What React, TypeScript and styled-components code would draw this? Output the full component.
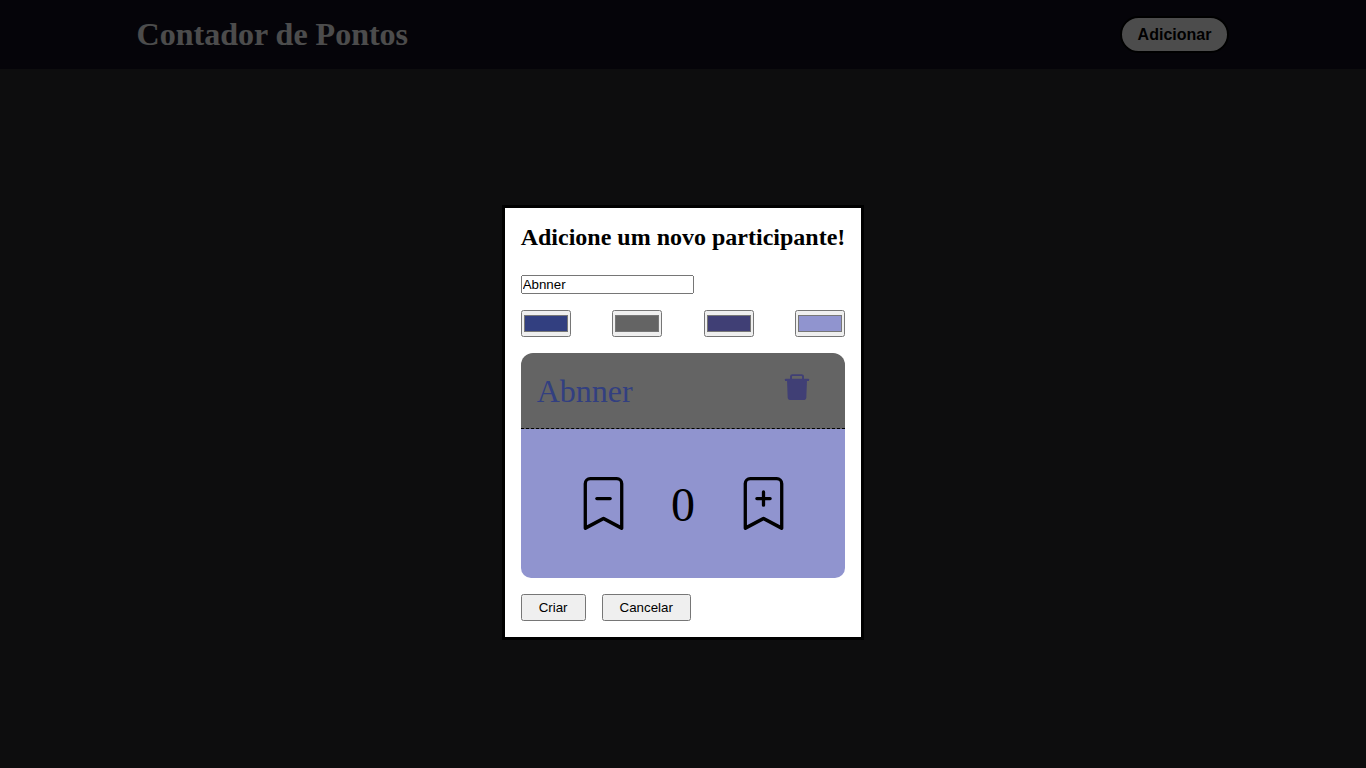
import React, { useState } from "react";
import styled, { createGlobalStyle } from "styled-components";
import { BsBookmarkDash, BsBookmarkPlus } from "react-icons/bs";

const GlobalStyle = createGlobalStyle`
  * { margin: 0; padding: 0; box-sizing: border-box; }
  body {
    min-height: 100vh;
    background: #2c2c2f;
    font-family: "Liberation Serif", "Times New Roman", serif;
  }
  button, input { font-family: "Liberation Sans", Arial, sans-serif; }
`;

const Header = styled.header`
  display: flex;
  align-items: center;
  justify-content: space-between;
  padding: 16px 10%;
  background: #110f20;
`;

const Title = styled.h1`
  font-size: 32px;
  line-height: 37px;
  color: #fff;
`;

const AddButton = styled.button`
  padding: 8px 16px;
  border: 2px solid #000;
  border-radius: 20px;
  background: #fff;
  color: #000;
  font-size: 16px;
  font-weight: bold;
  line-height: 17px;
`;

const Overlay = styled.div`
  position: fixed;
  inset: 0;
  display: grid;
  place-items: center;
  padding-top: 10vh;
  background: rgba(0, 0, 0, 0.7);
`;

const Dialog = styled.form`
  display: flex;
  flex-direction: column;
  align-items: stretch;
  gap: 16px;
  padding: 16px;
  border: 3px solid #000;
  background: #fff;
`;

const DialogTitle = styled.h2`
  padding-bottom: 8px;
  font-size: 24px;
  line-height: 27px;
`;

const NameInput = styled.input`
  align-self: flex-start;
  width: 173px;
`;

const Colors = styled.div`
  display: flex;
  justify-content: space-between;
`;

const ColorInput = styled.input`
  width: 50px;
  height: 27px;
`;

const Card = styled.section`
  overflow: hidden;
  border-radius: 12px 12px 10px 10px;
`;

const CardHeader = styled.div<{ $bg: string }>`
  display: flex;
  align-items: flex-start;
  justify-content: space-between;
  padding: 20px 16px 18px;
  border-bottom: 1px dashed #000;
  background: ${(p) => p.$bg};
`;

const Name = styled.p<{ $color: string }>`
  color: ${(p) => p.$color};
  font-size: 32px;
  line-height: 37px;
`;

const IconButton = styled.button<{ $width: number; $color?: string }>`
  display: flex;
  justify-content: ${(p) => (p.$color ? "center" : "flex-end")};
  width: ${(p) => p.$width}px;
  border: 0;
  background: none;
  color: ${(p) => p.$color || "#000"};
`;

const CardBody = styled.div<{ $bg: string }>`
  display: flex;
  align-items: center;
  justify-content: center;
  gap: 41px;
  padding: 47px 16px;
  background: ${(p) => p.$bg};
`;

const Points = styled.span`
  padding-top: 2px;
  font-size: 48px;
  line-height: 53px;
`;

const Actions = styled.div`
  display: flex;
  gap: 16px;
`;

const ActionButton = styled.button`
  padding: 4px 16px;
`;

const TrashIcon = () => (
  <svg width="30" height="30" viewBox="0 1 30 30" aria-hidden="true">
    <path d="M9 8V4.5A1.4 1.4 0 0 1 10.4 3.1h9.2A1.4 1.4 0 0 1 21 4.5V8" fill="none" stroke="currentColor" strokeWidth="1.9" />
    <rect x="3" y="6.7" width="24" height="2.3" rx="0.6" fill="currentColor" />
    <path d="M5 8h20l-.7 18.1a1.9 1.9 0 0 1-1.9 1.8H7.6a1.9 1.9 0 0 1-1.9-1.8z" fill="currentColor" />
  </svg>
);

export default function App() {
  const [name, setName] = useState("Abnner");
  const [points, setPoints] = useState(0);
  const [colors, setColors] = useState(["#323f80", "#646464", "#403f75", "#9094cf"]);
  const labels = ["Cor do nome", "Cor do topo", "Cor do ícone", "Cor do fundo"];

  return (
    <>
      <GlobalStyle />
      <Header>
        <Title>Contador de Pontos</Title>
        <AddButton type="button">Adicionar</AddButton>
      </Header>
      <Overlay>
        <Dialog onSubmit={(e) => e.preventDefault()}>
          <DialogTitle>Adicione um novo participante!</DialogTitle>
          <NameInput
            type="text"
            aria-label="Nome"
            value={name}
            onChange={(e) => setName(e.target.value)}
          />
          <Colors>
            {colors.map((color, i) => (
              <ColorInput
                key={labels[i]}
                type="color"
                aria-label={labels[i]}
                value={color}
                onChange={(e) => setColors(colors.map((c, j) => (j === i ? e.target.value : c)))}
              />
            ))}
          </Colors>
          <Card>
            <CardHeader $bg={colors[1]}>
              <Name $color={colors[0]}>{name}</Name>
              <IconButton type="button" $width={64} $color={colors[2]} aria-label="Remover">
                <TrashIcon />
              </IconButton>
            </CardHeader>
            <CardBody $bg={colors[3]}>
              <IconButton type="button" $width={54} aria-label="Diminuir" onClick={() => setPoints(points - 1)}>
                <BsBookmarkDash size={53} />
              </IconButton>
              <Points>{points}</Points>
              <IconButton type="button" $width={54} aria-label="Aumentar" onClick={() => setPoints(points + 1)}>
                <BsBookmarkPlus size={53} />
              </IconButton>
            </CardBody>
          </Card>
          <Actions>
            <ActionButton type="submit">Criar</ActionButton>
            <ActionButton type="button">Cancelar</ActionButton>
          </Actions>
        </Dialog>
      </Overlay>
    </>
  );
}
